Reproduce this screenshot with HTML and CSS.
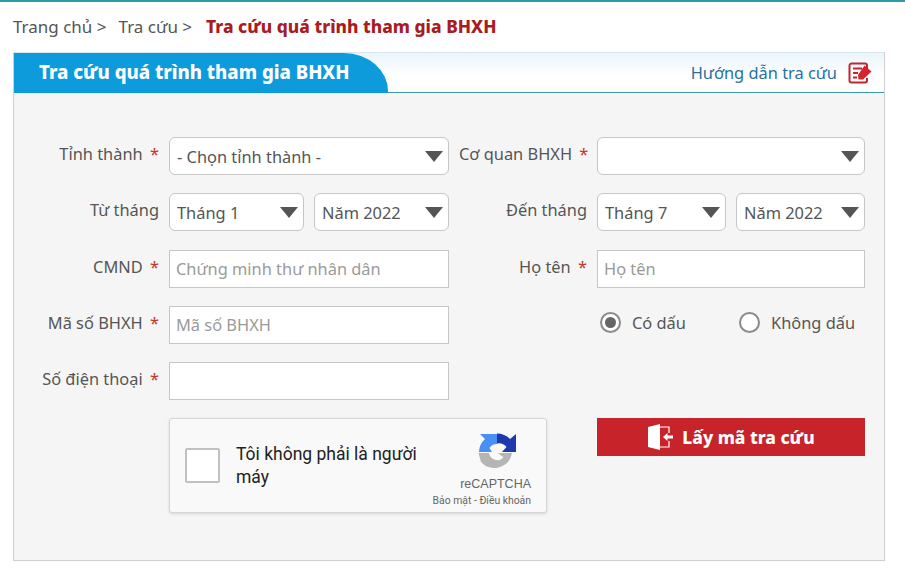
FILE: index.html
```html
<!DOCTYPE html>
<html lang="vi">
<head>
<meta charset="utf-8">
<title>Tra cứu quá trình tham gia BHXH</title>
<link rel="stylesheet" href="styles.css">
</head>
<body>
<nav class="crumbs">
  <a class="crumb">Trang chủ &gt;</a>
  <a class="crumb">Tra cứu &gt;</a>
  <strong class="crumb-now">Tra cứu quá trình tham gia BHXH</strong>
</nav>
<section class="panel">
  <header class="panel-head">
    <h1 class="tab">Tra cứu quá trình tham gia BHXH</h1>
    <a class="guide">Hướng dẫn tra cứu
      <svg class="guide-icon" viewBox="0 0 24 22" width="24" height="22">
        <path d="M19 7V3.5A2 2 0 0 0 17 1.5H3.5A2 2 0 0 0 1.500 3.500V18.500A2 2 0 0 0 3.500 20.500H17A2 2 0 0 0 19 18.500V16" fill="none" stroke="#c0272d" stroke-width="2"/>
        <path d="M5 6.500H14M5 11H10M5 15.500H9" stroke="#c0272d" stroke-width="2"/>
        <path d="M16.500 3.500L23.500 9.500L15 17.500L10.500 17.500L10 13Z" fill="#d8232a"/>
      </svg>
    </a>
  </header>
  <form class="panel-body">
    <label class="lbl">Tỉnh thành <i class="req">*</i></label>
    <div class="sel"><select class="ctl"><option>- Chọn tỉnh thành -</option></select><svg class="arrow" viewBox="0 0 18 11"><path d="M0 0H18L9 11Z"/></svg></div>
    <label class="lbl">Cơ quan BHXH <i class="req">*</i></label>
    <div class="sel"><select class="ctl"><option></option></select><svg class="arrow" viewBox="0 0 18 11"><path d="M0 0H18L9 11Z"/></svg></div>

    <label class="lbl lbl-plain">Từ tháng</label>
    <div class="pair">
      <div class="sel"><select class="ctl"><option>Tháng 1</option></select><svg class="arrow" viewBox="0 0 18 11"><path d="M0 0H18L9 11Z"/></svg></div>
      <div class="sel"><select class="ctl"><option>Năm 2022</option></select><svg class="arrow" viewBox="0 0 18 11"><path d="M0 0H18L9 11Z"/></svg></div>
    </div>
    <label class="lbl lbl-plain">Đến tháng</label>
    <div class="pair">
      <div class="sel"><select class="ctl"><option>Tháng 7</option></select><svg class="arrow" viewBox="0 0 18 11"><path d="M0 0H18L9 11Z"/></svg></div>
      <div class="sel"><select class="ctl"><option>Năm 2022</option></select><svg class="arrow" viewBox="0 0 18 11"><path d="M0 0H18L9 11Z"/></svg></div>
    </div>

    <label class="lbl">CMND <i class="req">*</i></label>
    <input class="ctl ctl-text" placeholder="Chứng minh thư nhân dân">
    <label class="lbl">Họ tên <i class="req">*</i></label>
    <input class="ctl ctl-text" placeholder="Họ tên">

    <label class="lbl">Mã số BHXH <i class="req">*</i></label>
    <input class="ctl ctl-text" placeholder="Mã số BHXH">
    <div class="radios">
      <span class="radio"><span class="dot dot-on"></span>Có dấu</span>
      <span class="radio"><span class="dot"></span>Không dấu</span>
    </div>

    <label class="lbl">Số điện thoại <i class="req">*</i></label>
    <input class="ctl ctl-text">
    <div class="blank"></div>

    <div class="captcha">
      <span class="captcha-box"></span>
      <span class="captcha-text">Tôi không phải là người máy</span>
      <div class="captcha-brand">
        <svg class="captcha-logo" viewBox="0 0 38 38" width="38" height="38">
          <path d="M1 19A18 18 0 0 1 7 6L2 1H19V11A8.500 8.500 0 0 0 11.500 15L14 19Z" fill="#4a90f2"/>
          <path d="M19 0.500A18.500 18.500 0 0 1 32 6L38 1V19H24L28.500 14A10 10 0 0 0 19 10.500Z" fill="#1c3aa9"/>
          <path d="M0.500 20H11A8.500 8.500 0 0 0 25.500 24.500L20 20H34A18 18 0 0 1 3 29Z" fill="#b5b5b5"/>
        </svg>
        <span class="captcha-name">reCAPTCHA</span>
        <span class="captcha-terms">Bảo mật - Điều khoản</span>
      </div>
    </div>
    <button class="submit" type="button">
      <svg viewBox="0 0 26 28" width="26" height="28">
        <path d="M1 4L13 1V27L1 24Z" fill="#fff"/>
        <path d="M13 4H22V10M22 18V24H13" fill="none" stroke="#fff" stroke-width="1.200"/>
        <path d="M16 14L20.500 10V12.500H26V15.500H20.500V18Z" fill="#fff"/>
      </svg>
      Lấy mã tra cứu
    </button>
  </form>
</section>
</body>
</html>
```

FILE: styles.css
```css
* { box-sizing: border-box; }
html, body { height: 100%; }
body {
  margin: 0;
  background: #fff;
  border-top: 2px solid #2f9aa8;
  font-family: "Noto Sans", "Liberation Sans", sans-serif;
  font-size: 16.400px;
  color: #555;
  overflow: hidden;
}
.crumbs {
  display: flex;
  align-items: center;
  height: 50px;
  padding: 0 0 2px 13px;
  gap: 12px;
  font-size: 17px;
  color: #555;
}
.crumb-now {
  margin-left: 2px;
  color: #a81c22;
  font-size: 17.400px;
  font-weight: 800;
}
.panel {
  margin: 0 20px 0 13px;
  border: 1px solid #cfcfcf;
  border-top: 1px solid #d8e8ee;
  background: #f5f5f5;
  height: 509px;
}
.panel-head {
  display: flex;
  align-items: center;
  justify-content: space-between;
  height: 40px;
  padding-right: 12px;
  background: linear-gradient(#eaf5fa, #fff 60%);
  border-bottom: 1px solid #3a9aa8;
}
.tab {
  margin: 0;
  width: 374px;
  height: 40px;
  padding: 0 0 0 25px;
  line-height: 38px;
  font-size: 18.600px;
  font-weight: 800;
  color: #fff;
  background: #0e9bdc;
  border-top-right-radius: 44px 38px;
}
.guide { display: flex; align-items: center; gap: 11px; color: #27719f; }
.guide-icon { display: block; }
.panel-body {
  display: grid;
  grid-template-columns: 145px 280px 128px 268px;
  column-gap: 10px;
  grid-auto-rows: 38px;
  row-gap: 18.250px;
  padding: 44px 0 0 0;
}
.lbl {
  text-align: right;
  line-height: 34px;
  white-space: nowrap;
}
.lbl-plain { line-height: 34px; }
.req { font-style: normal; color: #c9302c; margin-left: 3px; }
.ctl {
  display: block;
  width: 100%;
  height: 100%;
  padding: 0 6px;
  border: 1px solid #c6c6c6;
  background: #fff;
  font: inherit;
  color: #555;
  appearance: none;
  outline: 0;
}
select.ctl { border-radius: 6px; padding-left: 7px; }
.ctl-text::placeholder { color: #9a9a9a; opacity: 1; }
.sel { position: relative; height: 100%; min-width: 0; }
.arrow {
  position: absolute;
  right: 6px;
  top: 14px;
  width: 18px;
  height: 11px;
  fill: #555;
}
.pair { display: grid; grid-template-columns: 1fr 1fr; column-gap: 10px; }
.radios { grid-column: 3 / 5; display: flex; align-items: center; padding-left: 141px; height: 34px; }
.radio { flex: none; display: flex; align-items: center; gap: 11px; width: 139px; white-space: nowrap; }
.dot {
  flex: none;
  position: relative;
  width: 21px;
  height: 21px;
  border: 2px solid #8a8a8a;
  border-radius: 50%;
  background: #fff;
}
.dot-on::after {
  content: "";
  position: absolute;
  inset: 3px;
  border-radius: 50%;
  background: #666;
}
.blank { grid-column: 3 / 5; }
.captcha {
  grid-column: 2;
  width: 378px;
  height: 95px;
  display: flex;
  align-items: center;
  padding: 0 15px;
  background: #f9f9f9;
  border: 1px solid #d6d6d6;
  border-radius: 3px;
  box-shadow: 0 1px 3px rgba(0, 0, 0, .12);
  color: #222;
  font-family: Roboto, sans-serif;
}
.captcha-box {
  flex: none;
  width: 35px;
  height: 35px;
  background: #fff;
  border: 2px solid #c1c1c1;
  border-radius: 2px;
}
.captcha-text { width: 200px; margin-left: 16px; font-size: 17.500px; line-height: 23px; }
.captcha-brand {
  flex: none;
  margin-left: auto;
  width: 100px;
  display: flex;
  flex-direction: column;
  align-items: flex-end;
  align-self: flex-start;
  padding-top: 14px;
}
.captcha-logo { display: block; margin-right: 15px; }
.captcha-name { margin-top: 5px; font-size: 12.500px; line-height: 16px; color: #666; font-family: "Liberation Sans", sans-serif; }
.captcha-terms { margin-top: 3px; font-size: 10.400px; line-height: 12px; color: #666; white-space: nowrap; }
.submit {
  grid-column: 4;
  display: flex;
  align-items: center;
  justify-content: center;
  gap: 9px;
  width: 268px;
  height: 38px;
  padding: 0;
  border: 0;
  background: #c7232a;
  color: #fff;
  font-size: 17.400px;
  font-weight: 800;
  font-family: inherit;
}
```
